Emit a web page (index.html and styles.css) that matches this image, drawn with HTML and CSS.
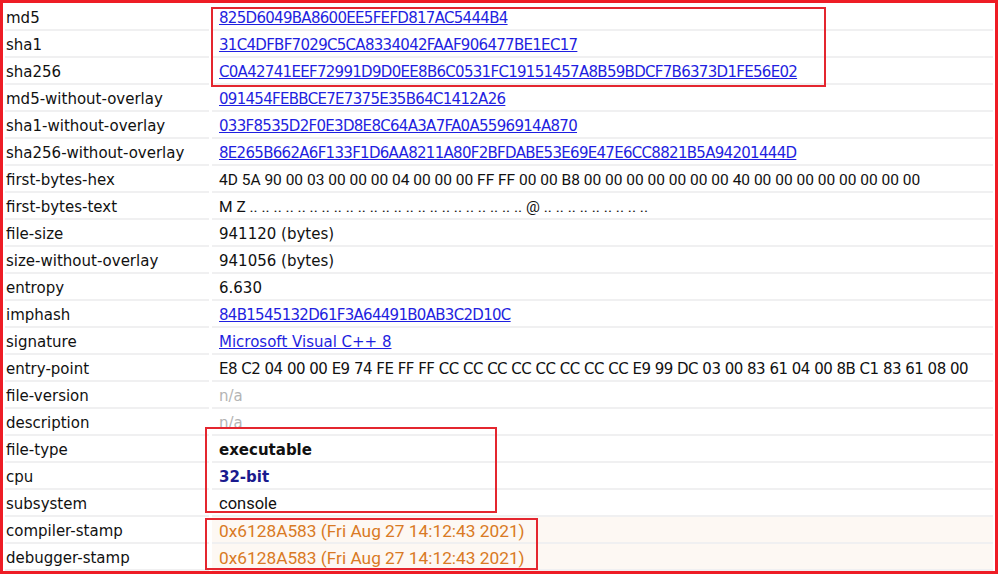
FILE: index.html
```html
<!DOCTYPE html>
<html lang="en">
<head>
  <meta charset="UTF-8">
  <title>indicators</title>
  <link rel="stylesheet" href="styles.css">
</head>
<body>
  <div class="frame">
    <div class="props">
      <div class="key">md5</div>
      <div class="val"><a class="hash" href="#">825D6049BA8600EE5FEFD817AC5444B4</a></div>
      <div class="key">sha1</div>
      <div class="val"><a class="hash" href="#">31C4DFBF7029C5CA8334042FAAF906477BE1EC17</a></div>
      <div class="key">sha256</div>
      <div class="val"><a class="hash" href="#">C0A42741EEF72991D9D0EE8B6C0531FC19151457A8B59BDCF7B6373D1FE56E02</a></div>
      <div class="key">md5-without-overlay</div>
      <div class="val"><a class="hash" href="#">091454FEBBCE7E7375E35B64C1412A26</a></div>
      <div class="key">sha1-without-overlay</div>
      <div class="val"><a class="hash" href="#">033F8535D2F0E3D8E8C64A3A7FA0A5596914A870</a></div>
      <div class="key">sha256-without-overlay</div>
      <div class="val"><a class="hash" href="#">8E265B662A6F133F1D6AA8211A80F2BFDABE53E69E47E6CC8821B5A94201444D</a></div>
      <div class="key">first-bytes-hex</div>
      <div class="val mono">4D 5A 90 00 03 00 00 00 04 00 00 00 FF FF 00 00 B8 00 00 00 00 00 00 00 40 00 00 00 00 00 00 00 00</div>
      <div class="key">first-bytes-text</div>
      <div class="val mono">M Z .. .. .. .. .. .. .. .. .. .. .. .. .. .. .. .. .. .. .. .. .. .. .. @ .. .. .. .. .. .. .. .. ..</div>
      <div class="key">file-size</div>
      <div class="val">941120 (bytes)</div>
      <div class="key">size-without-overlay</div>
      <div class="val">941056 (bytes)</div>
      <div class="key">entropy</div>
      <div class="val">6.630</div>
      <div class="key">imphash</div>
      <div class="val"><a class="hash" href="#">84B1545132D61F3A64491B0AB3C2D10C</a></div>
      <div class="key">signature</div>
      <div class="val"><a href="#">Microsoft Visual C++ 8</a></div>
      <div class="key">entry-point</div>
      <div class="val bytes">E8 C2 04 00 00 E9 74 FE FF FF CC CC CC CC CC CC CC CC E9 99 DC 03 00 83 61 04 00 8B C1 83 61 08 00</div>
      <div class="key">file-version</div>
      <div class="val na">n/a</div>
      <div class="key">description</div>
      <div class="val na">n/a</div>
      <div class="key">file-type</div>
      <div class="val strong">executable</div>
      <div class="key">cpu</div>
      <div class="val strong cpu">32-bit</div>
      <div class="key">subsystem</div>
      <div class="val plain">console</div>
      <div class="key">compiler-stamp</div>
      <div class="val stamp">0x6128A583 (Fri Aug 27 14:12:43 2021)</div>
      <div class="key">debugger-stamp</div>
      <div class="val stamp">0x6128A583 (Fri Aug 27 14:12:43 2021)</div>
    </div>

    <!-- highlight boxes drawn over the table -->
    <div class="mark mark-hashes"></div>
    <div class="mark mark-type"></div>
    <div class="mark mark-stamps"></div>
  </div>
</body>
</html>
```

FILE: styles.css
```css
body {
  margin: 0;
  background: white;
  font-family: 'DejaVu Sans', Verdana, sans-serif;
  font-size: 15px;
  color: #111;
}

.frame {
  position: relative;
  width: 998px;
  height: 574px;
  box-sizing: border-box;
  border: 3px solid #ee1c25;
  padding: 1px 2px 0 2px;
  background: white;
}

.props {
  display: grid;
  grid-template-columns: 204px 1fr;
  column-gap: 3px;
}

.key,
.val {
  height: 27px;
  line-height: 22px;
  padding-top: 3px;
  box-sizing: border-box;
  border-bottom: 2px solid #f0f0f1;
  white-space: nowrap;
  overflow: hidden;
}

.key {
  padding-left: 1px;
}

.val {
  padding-left: 7px;
}

.val a {
  color: #1f1fe0;
  text-decoration: underline;
}

.hash {
  letter-spacing: -0.7px;
}

.mono {
  font-family: Roboto, sans-serif;
  font-size: 15.5px;
}

.plain {
  font-family: Roboto, sans-serif;
  font-size: 16.5px;
}

.bytes {
  letter-spacing: -0.5px;
}

.na {
  color: #b4b4b4;
}

.strong {
  font-weight: bold;
}

.cpu {
  color: #1a1a8e;
}

.stamp {
  font-family: Roboto, sans-serif;
  font-size: 17.3px;
  color: #d97a24;
  background: #fdf8f3;
}

.mark {
  position: absolute;
  border: 2px solid #e4262f;
  box-sizing: border-box;
}

.mark-hashes {
  left: 208px;
  top: 4px;
  width: 615px;
  height: 80px;
}

.mark-type {
  left: 202px;
  top: 424px;
  width: 292px;
  height: 86px;
}

.mark-stamps {
  left: 202px;
  top: 515px;
  width: 333px;
  height: 52px;
}
```
